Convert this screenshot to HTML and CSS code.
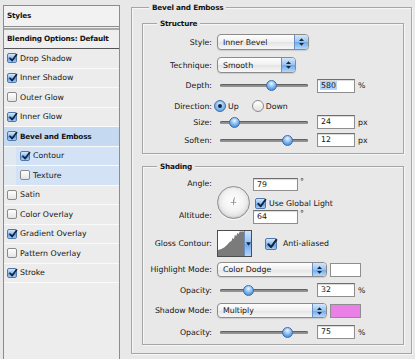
FILE: index.html
```html
<!DOCTYPE html>
<html>
<head>
<meta charset="utf-8">
<link rel="stylesheet" href="styles.css">
</head>
<body>
<div class="dlg">
  <div class="styles">
    <div class="hdr">Styles</div>
    <div class="blend">Blending Options: Default</div>
    <ul class="list">
      <li><span class="cb on"><svg viewBox="0 0 10 10"><path d="M2 5.2 4.2 7.6 8.6 1.6"/></svg></span>Drop Shadow</li>
      <li><span class="cb on"><svg viewBox="0 0 10 10"><path d="M2 5.2 4.2 7.6 8.6 1.6"/></svg></span>Inner Shadow</li>
      <li><span class="cb"></span>Outer Glow</li>
      <li><span class="cb on"><svg viewBox="0 0 10 10"><path d="M2 5.2 4.2 7.6 8.6 1.6"/></svg></span>Inner Glow</li>
      <li class="sel"><span class="cb on"><svg viewBox="0 0 10 10"><path d="M2 5.2 4.2 7.6 8.6 1.6"/></svg></span>Bevel and Emboss</li>
      <li class="sub"><span class="cb on"><svg viewBox="0 0 10 10"><path d="M2 5.2 4.2 7.6 8.6 1.6"/></svg></span>Contour</li>
      <li class="sub"><span class="cb"></span>Texture</li>
      <li><span class="cb"></span>Satin</li>
      <li><span class="cb"></span>Color Overlay</li>
      <li><span class="cb on"><svg viewBox="0 0 10 10"><path d="M2 5.2 4.2 7.6 8.6 1.6"/></svg></span>Gradient Overlay</li>
      <li><span class="cb"></span>Pattern Overlay</li>
      <li><span class="cb on"><svg viewBox="0 0 10 10"><path d="M2 5.2 4.2 7.6 8.6 1.6"/></svg></span>Stroke</li>
    </ul>
  </div>

  <div class="group outer">
    <span class="legend lg-outer">Bevel and Emboss</span>

    <div class="group structure">
      <span class="legend lg-inner">Structure</span>

      <div class="row r1">
        <span class="lbl">Style:</span>
        <div class="pop w-style"><span class="ptxt">Inner Bevel</span><span class="arr"><svg viewBox="0 0 6 9"><path d="M3 0 6 3.4H0Z M3 9 0 5.6H6Z"/></svg></span></div>
      </div>
      <div class="row r2">
        <span class="lbl">Technique:</span>
        <div class="pop w-tech"><span class="ptxt">Smooth</span><span class="arr"><svg viewBox="0 0 6 9"><path d="M3 0 6 3.4H0Z M3 9 0 5.6H6Z"/></svg></span></div>
      </div>
      <div class="row r3">
        <span class="lbl">Depth:</span>
        <div class="sl"><span class="knob" style="left:46px"></span></div>
        <div class="inp"><span class="hl">580</span></div>
        <span class="unit">%</span>
      </div>
      <div class="row r4">
        <span class="lbl">Direction:</span>
        <span class="radio on first"></span><span class="rtxt">Up</span>
        <span class="radio second"></span><span class="rtxt">Down</span>
      </div>
      <div class="row r5">
        <span class="lbl">Size:</span>
        <div class="sl"><span class="knob" style="left:9px"></span></div>
        <div class="inp">24</div>
        <span class="unit">px</span>
      </div>
      <div class="row r6">
        <span class="lbl">Soften:</span>
        <div class="sl"><span class="knob" style="left:62px"></span></div>
        <div class="inp">12</div>
        <span class="unit">px</span>
      </div>
    </div>

    <div class="group shading">
      <span class="legend lg-inner">Shading</span>

      <div class="angle">
        <div class="alabels">
          <span class="al1">Angle:</span>
          <span class="al2">Altitude:</span>
        </div>
        <div class="dial">
          <svg viewBox="0 0 33 33"><path d="M16.5 13.5v6M13.5 16.5h6" stroke="#9a9a9a" stroke-width="0.9" fill="none"/><path d="M16.5 16.5 17.5 11" stroke="#8a8a8a" stroke-width="0.9" fill="none"/></svg>
        </div>
        <div class="acol">
          <div class="arow"><div class="inp w-ang">79</div><span class="deg">°</span></div>
          <div class="arow glob"><span class="cb cb11 on"><svg viewBox="0 0 10 10"><path d="M2 5.2 4.2 7.6 8.6 1.6"/></svg></span><span class="gtxt">Use Global Light</span></div>
          <div class="arow alt"><div class="inp w-ang tall">64</div><span class="deg">°</span></div>
        </div>
      </div>

      <div class="row gloss">
        <span class="lbl">Gloss Contour:</span>
        <div class="contour">
          <div class="cimg"><svg viewBox="0 0 27 25" preserveAspectRatio="none"><path d="M0 25V19C5 18 9 15 12 11L14 10 15 7 16.5 8 17.5 4 19 5 20 2 21.5 3 22.5 0.5H27V25Z" fill="#7b7b7b"/></svg></div>
          <div class="carr"><svg viewBox="0 0 6 4"><path d="M0 0H6L3 4Z"/></svg></div>
        </div>
        <span class="cb cb12 on aa"><svg viewBox="0 0 10 10"><path d="M2 5.2 4.2 7.6 8.6 1.6"/></svg></span>
        <span class="aatxt">Anti-aliased</span>
      </div>

      <div class="row hm">
        <span class="lbl">Highlight Mode:</span>
        <div class="pop w-mode"><span class="ptxt">Color Dodge</span><span class="arr"><svg viewBox="0 0 6 9"><path d="M3 0 6 3.4H0Z M3 9 0 5.6H6Z"/></svg></span></div>
        <span class="swatch white"></span>
      </div>
      <div class="row op1">
        <span class="lbl">Opacity:</span>
        <div class="sl"><span class="knob" style="left:23px"></span></div>
        <div class="inp">32</div>
        <span class="unit">%</span>
      </div>
      <div class="row sm">
        <span class="lbl">Shadow Mode:</span>
        <div class="pop w-mode"><span class="ptxt">Multiply</span><span class="arr"><svg viewBox="0 0 6 9"><path d="M3 0 6 3.4H0Z M3 9 0 5.6H6Z"/></svg></span></div>
        <span class="swatch pink"></span>
      </div>
      <div class="row op2">
        <span class="lbl">Opacity:</span>
        <div class="sl"><span class="knob" style="left:62px"></span></div>
        <div class="inp">75</div>
        <span class="unit">%</span>
      </div>
    </div>
  </div>
</div>
</body>
</html>
```

FILE: styles.css
```css
html, body {
  margin: 0;
  padding: 0;
}
body {
  background: #e8e8e8;
  font-family: "DejaVu Sans", "Liberation Sans", sans-serif;
  font-size: 7.8px;
  color: #151515;
  width: 415px;
  height: 359px;
  overflow: hidden;
}
* { box-sizing: border-box; }

.bold,
.hdr,
.blend,
.list li.sel,
.legend {
  font-weight: bold;
  font-size: 7.3px;
  letter-spacing: -0.2px;
}

.dlg {
  display: flex;
  align-items: flex-start;
  padding-left: 3px;
}

/* ---------- left styles list ---------- */
.styles {
  width: 117px;
  height: 354px;
  margin-top: 5px;
  border: 1px solid #8c8c8c;
  border-bottom: none;
  background: #ededed;
  display: flex;
  flex-direction: column;
  flex: none;
}
.hdr {
  height: 21px;
  line-height: 20px;
  padding-left: 3px;
  background: #f2f2f2;
  border-bottom: 1px solid #8e8e8e;
}
.blend {
  margin-top: 1px;
  height: 21px;
  line-height: 18px;
  padding-left: 3px;
  border-top: 2px solid #a9a9a9;
  border-bottom: 1px solid #555;
  background: #efefef;
}
.list {
  list-style: none;
  margin: 0;
  padding: 0;
}
.list li {
  height: 19.5px;
  border-bottom: 1px solid #fafafa;
  display: flex;
  align-items: center;
  padding-left: 3px;
  background: #ececec;
}
.list li.sel {
  background: #c5d9f1;
}
.list li.sub {
  padding-left: 16px;
  background: linear-gradient(to right, #e2e8f0 12px, #d3e2f4 12px);
}

/* checkboxes */
.cb {
  width: 10px;
  height: 10px;
  flex: none;
  border: 1px solid #8a8a8a;
  border-radius: 2px;
  background: linear-gradient(#ffffff, #e4e4e4);
  margin-right: 3px;
  display: inline-flex;
  position: relative;
}
.cb.on {
  border-color: #4f77aa;
  background: linear-gradient(#d6e8fb, #86b6ea 55%, #5f9ce0 56%, #a9d0f7);
}
.cb svg {
  width: 10px;
  height: 10px;
  margin: -1px 0 0 0;
  flex: none;
}
.cb svg path {
  fill: none;
  stroke: #15233d;
  stroke-width: 1.7;
  stroke-linecap: round;
  stroke-linejoin: round;
}
.cb11 { width: 11px; height: 11px; }
.cb12 { width: 12px; height: 12px; }
.cb11 svg { width: 11px; height: 11px; }
.cb12 svg { width: 12px; height: 12px; }

/* ---------- right group boxes ---------- */
.group {
  position: relative;
  border: 1px solid #a6a6a6;
  box-shadow: 1px 1px 0 #f6f6f6, inset 1px 1px 0 #f6f6f6;
}
.outer {
  margin-left: 11px;
  margin-top: 7px;
  width: 281px;
  height: 347px;
  padding-top: 15px;
  padding-left: 10px;
  flex: none;
}
.legend {
  position: absolute;
  top: -6px;
  line-height: 11px;
  padding: 0 3px;
  background: #e8e8e8;
  white-space: nowrap;
}
.lg-outer { left: 17px; }
.lg-inner { left: 14px; }

.structure {
  width: 262px;
  height: 131px;
  padding-top: 10px;
}
.shading {
  margin-top: 12px;
  width: 262px;
  height: 179px;
  padding-top: 11px;
}

.row {
  display: flex;
  align-items: center;
  white-space: nowrap;
}
.lbl {
  width: 69px;
  margin-right: 5px;
  text-align: right;
  flex: none;
}
.r1 { height: 16px; }
.r2 { height: 16px; margin-top: 7px; }
.r3 { height: 15px; margin-top: 5px; }
.r4 { height: 14px; margin-top: 6px; }
.r5 { height: 14px; margin-top: 2px; }
.r6 { height: 14px; margin-top: 4px; }

/* popups */
.pop {
  height: 16px;
  border: 1px solid #8b8b8b;
  border-radius: 4px;
  background: linear-gradient(#fefefe, #f0f0f0 50%, #e4e4e4 51%, #f7f7f7);
  display: flex;
  align-items: center;
  padding-left: 5px;
  overflow: hidden;
  flex: none;
  box-shadow: 0 1px 1px rgba(0, 0, 0, 0.12);
}
.w-style { width: 92px; }
.w-tech { width: 79px; }
.w-mode { width: 110px; height: 15px; }
.ptxt { flex: 1; }
.arr {
  width: 14px;
  align-self: stretch;
  border-left: 1px solid #6b8fc0;
  background: linear-gradient(#d4e7fb, #97c3f1 50%, #6ba9ec 51%, #b7d8fa);
  display: flex;
  align-items: center;
  justify-content: center;
  flex: none;
}
.arr svg {
  width: 5px;
  height: 8px;
}
.arr svg path { fill: #1b2638; }

/* sliders */
.sl {
  position: relative;
  width: 88px;
  height: 3px;
  margin-left: 3px;
  margin-right: 9px;
  border-radius: 2px;
  background: #939393;
  box-shadow: inset 0 1px 1px #5e5e5e;
  flex: none;
}
.knob {
  position: absolute;
  top: -4px;
  width: 11px;
  height: 11px;
  border-radius: 50%;
  border: 1px solid #3e6da9;
  background: radial-gradient(circle at 50% 30%, #eef6ff 0, #9ccaf5 35%, #4a8fdc 80%, #6aa8ec 100%);
}

/* inputs */
.inp {
  width: 38px;
  height: 14px;
  border: 1px solid #8e8e8e;
  border-top-color: #6e6e6e;
  background: #fff;
  padding-left: 3px;
  line-height: 12px;
  box-shadow: inset 0 1px 1px rgba(0, 0, 0, 0.15);
  flex: none;
}
.hl {
  background: #b4d4f7;
  padding: 0 1px;
  margin-left: -1px;
}
.unit { margin-left: 3px; }

/* radios */
.radio {
  width: 12px;
  height: 12px;
  border-radius: 50%;
  border: 1px solid #8a8a8a;
  background: linear-gradient(#ffffff, #e2e2e2);
  flex: none;
  display: flex;
  align-items: center;
  justify-content: center;
}
.radio.on {
  border-color: #3f6ea9;
  background: radial-gradient(circle at 50% 35%, #e4f0fd 0, #8fc0f2 45%, #4c90dd 100%);
}
.radio.on::after {
  content: "";
  width: 4px;
  height: 4px;
  border-radius: 50%;
  background: #14243d;
}
.radio.first { margin-left: -3px; }
.radio.second { margin-left: 13px; }
.rtxt { margin-left: 2px; }

/* angle block */
.angle {
  display: flex;
  align-items: flex-start;
  height: 46px;
}
.alabels {
  width: 69px;
  margin-right: 5px;
  display: flex;
  flex-direction: column;
  align-items: flex-end;
  flex: none;
}
.al1 { line-height: 12px; }
.al2 { line-height: 12px; margin-top: 20px; }
.dial {
  width: 33px;
  height: 33px;
  margin-top: 8px;
  border-radius: 50%;
  border: 1px solid #8d8d8d;
  background: radial-gradient(circle at 50% 45%, #ffffff 0, #f3f3f3 45%, #d9d9d9 80%, #c4c4c4 100%);
  box-shadow: inset 0 -1px 2px rgba(0, 0, 0, 0.12), 0 1px 1px rgba(255, 255, 255, 0.8);
  flex: none;
}
.dial svg {
  width: 31px;
  height: 31px;
  display: block;
}
.acol {
  margin-left: 3px;
  display: flex;
  flex-direction: column;
}
.arow {
  display: flex;
  align-items: flex-start;
  white-space: nowrap;
}
.w-ang { width: 45px; height: 13px; line-height: 11px; }
.w-ang.tall { height: 14px; line-height: 12px; }
.deg {
  margin-left: 2px;
  line-height: 8px;
}
.glob {
  margin-top: 6px;
  height: 12px;
  align-items: center;
}
.glob .cb { margin-left: 2px; }
.alt { margin-top: 1px; }

/* gloss contour */
.gloss {
  height: 27px;
  margin-top: 6px;
}
.contour {
  width: 35px;
  height: 27px;
  border: 1px solid #4d4d4d;
  display: flex;
  flex: none;
  background: #fff;
}
.cimg {
  flex: 1;
  background: #fff;
}
.cimg svg {
  width: 100%;
  height: 100%;
  display: block;
}
.carr {
  width: 7px;
  border-left: 1px solid #6b8fc0;
  background: linear-gradient(#cfe4fb, #8fbff1 50%, #6aa8ec 51%, #b5d7fa);
  display: flex;
  align-items: center;
  justify-content: center;
  flex: none;
}
.carr svg { width: 5px; height: 4px; }
.carr svg path { fill: #15233d; }
.aa { margin-left: 13px; margin-right: 6px; }

.hm { height: 15px; margin-top: 5px; }
.op1 { height: 14px; margin-top: 6px; }
.sm { height: 15px; margin-top: 6px; }
.op2 { height: 14px; margin-top: 7px; }

.swatch {
  width: 31px;
  height: 14px;
  margin-left: 3px;
  border: 1px solid #8e8e8e;
  flex: none;
}
.swatch.white { background: #ffffff; }
.swatch.pink { background: #e97fe7; }
```
